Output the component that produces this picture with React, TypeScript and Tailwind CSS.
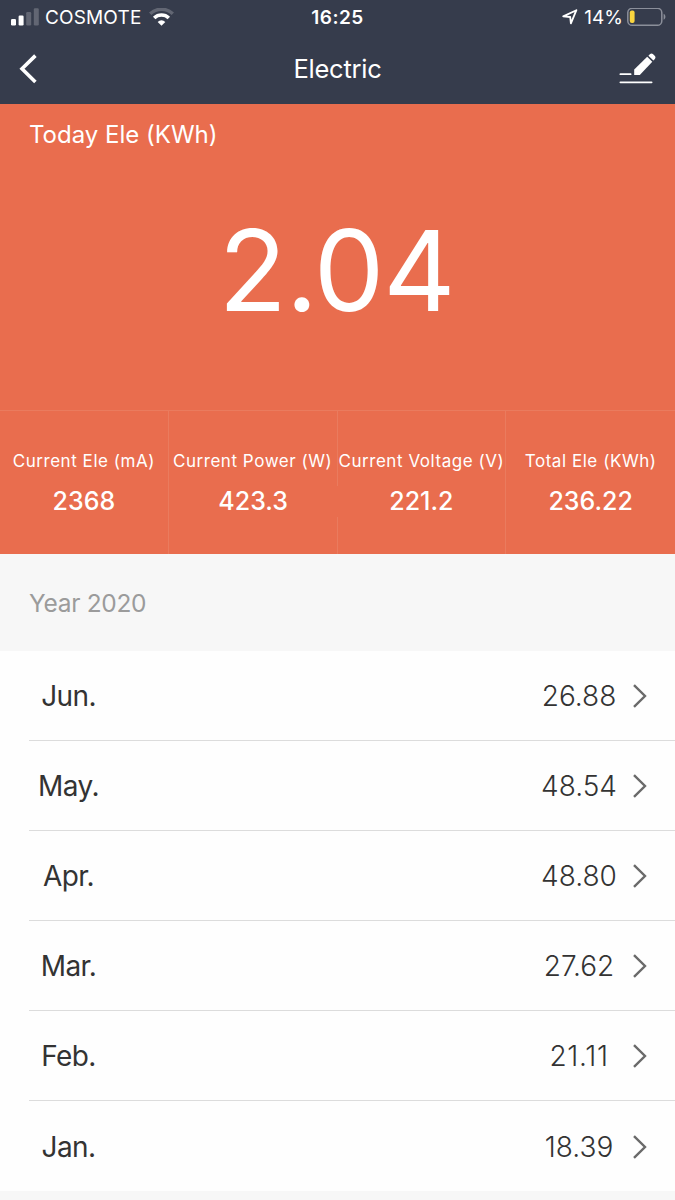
interface Stat {
  label: string;
  value: string;
}

interface MonthRow {
  month: string;
  value: string;
}

const stats: Stat[] = [
  { label: "Current Ele (mA)", value: "2368" },
  { label: "Current Power (W)", value: "423.3" },
  { label: "Current Voltage (V)", value: "221.2" },
  { label: "Total Ele (KWh)", value: "236.22" },
];

const months: MonthRow[] = [
  { month: "Jun.", value: "26.88" },
  { month: "May.", value: "48.54" },
  { month: "Apr.", value: "48.80" },
  { month: "Mar.", value: "27.62" },
  { month: "Feb.", value: "21.11" },
  { month: "Jan.", value: "18.39" },
];

const SignalIcon = () => (
  <svg width="28" height="18" viewBox="0 0 28 18" fill="#fff">
    <rect x="0" y="11" width="5" height="6.5" rx="1.2" />
    <rect x="7.6" y="7.5" width="5" height="10" rx="1.2" />
    <rect x="15.2" y="4" width="5" height="13.5" rx="1.2" opacity="0.22" />
    <rect x="22.8" y="0.3" width="5" height="17.2" rx="1.2" opacity="0.22" />
  </svg>
);

const WifiIcon = () => (
  <svg width="25" height="18" viewBox="0 0 25 18" fill="none" stroke="#fff">
    <path d="M1.2 5.8a16.2 16.2 0 0 1 22.6 0" strokeWidth="3.4" opacity="0.22" />
    <path d="M5.2 10a10.4 10.4 0 0 1 14.6 0" strokeWidth="3.5" />
    <path d="M12.5 17.8l-3.8-3.9a5.4 5.4 0 0 1 7.6 0z" fill="#fff" stroke="none" />
  </svg>
);

const LocationIcon = () => (
  <svg width="16" height="16" viewBox="0 0 16 16" fill="none" stroke="#fff" strokeWidth="1.8" strokeLinejoin="round">
    <path d="M14.4 1.2L1.2 7.4l7 .6.7 6.4z" />
  </svg>
);

const BatteryIcon = () => (
  <svg width="40" height="19" viewBox="0 0 40 19" fill="none">
    <rect x="0.8" y="0.3" width="34" height="17" rx="4.4" stroke="#8b8f9a" strokeWidth="1.5" />
    <path d="M36.6 5.8c2.4.8 2.4 5.2 0 6z" fill="#8b8f9a" />
    <rect x="2.8" y="2.6" width="4.8" height="12.4" rx="2" fill="#fad53f" />
  </svg>
);

const EditIcon = () => (
  <svg width="38" height="32" viewBox="0 0 38 32" fill="#fff">
    <rect x="0.5" y="20.3" width="12" height="1.8" rx="0.9" />
    <rect x="0.5" y="28.4" width="33" height="1.8" rx="0.9" />
    <path d="M15.2 16.4L28.2 3.8l5.1 5L20.8 22.1h-5.6z" />
    <path d="M29.4 2.7l1.7-1.6c.9-.8 1.9-.8 2.8 0l2 2c.8.9.8 1.9 0 2.8l-1.5 1.7z" />
  </svg>
);

const BackIcon = () => (
  <svg width="18" height="30" viewBox="0 0 18 30" fill="none" stroke="#fff" strokeWidth="3.6">
    <path d="M16.4 1.6L3 14.8l13.4 13.2" />
  </svg>
);

const ChevronIcon = () => (
  <svg width="16" height="24" viewBox="0 0 16 24" fill="none" stroke="#6a6a6a" strokeWidth="2.4">
    <path d="M2 1.2L13 12 2 22.8" />
  </svg>
);

const App = () => {
  return (
    <div className="flex h-[1200px] w-[675px] flex-col overflow-hidden bg-[#f7f7f7] font-['Inter','Liberation_Sans',sans-serif]">
      {/* Status bar */}
      <div className="bg-[#363c4c] text-white">
        <div className="grid h-[34px] grid-cols-3 items-center text-[19px] leading-[30px]">
          <div className="flex items-center pl-[11px]">
            <SignalIcon />
            <span className="ml-[6px] pt-[2px] tracking-[0.15px]">COSMOTE</span>
            <span className="ml-[8px]">
              <WifiIcon />
            </span>
          </div>
          <div className="pt-[2px] text-center font-semibold tracking-[0.5px]">16:25</div>
          <div className="flex items-center justify-end pr-[8px]">
            <LocationIcon />
            <span className="ml-[6px] pt-[2px]">14%</span>
            <span className="ml-[4px]">
              <BatteryIcon />
            </span>
          </div>
        </div>

        {/* Navigation */}
        <div className="grid h-[70px] grid-cols-3 items-center">
          <button className="pl-[19px]">
            <BackIcon />
          </button>
          <h1 className="text-center text-[25.5px] tracking-[-0.25px]">Electric</h1>
          <button className="flex justify-end pr-[18px]">
            <EditIcon />
          </button>
        </div>
      </div>

      {/* Today summary */}
      <div className="h-[306px] bg-[#e96d4e] text-white">
        <div className="h-[60px] pl-[29px] text-[24px] leading-[62px]">Today Ele (KWh)</div>
        <div className="pr-[2px] text-center text-[112px] leading-[212px] tracking-[-1.2px]">2.04</div>
      </div>

      <div className="grid h-[144px] grid-cols-4 border-t border-[#ea7b5e] bg-[#e96d4e] text-center text-white">
        {stats.map((stat, index) => (
          <div key={stat.label} className="flex flex-col">
            <div className={`h-[75px] whitespace-nowrap pt-[36px] text-[17px] leading-[28px] tracking-[0.55px] ${index < 3 ? "border-r border-[#ea7b5e]" : ""}`}>
              {stat.label}
            </div>
            <div className={`h-[31px] text-[25px] font-medium leading-[31px] ${index === 0 || index === 2 ? "border-r border-[#ea7b5e]" : ""}`}>
              {stat.value}
            </div>
            <div className={`flex-1 ${index < 3 ? "border-r border-[#ea7b5e]" : ""}`} />
          </div>
        ))}
      </div>

      {/* Monthly list */}
      <div className="h-[97px] pl-[29px] text-[24.5px] leading-[98px] tracking-[-0.3px] text-[#9b9b9b]">Year 2020</div>
      <div className="bg-[#fefefe]">
        {months.map((row, index) => (
          <div key={row.month} className={`ml-[29px] flex h-[90px] items-center ${index < months.length - 1 ? "border-b border-[#dcdcdc]" : "pt-[1px]"}`}>
            <div className="w-[79px] pt-[1px] text-center text-[28px] tracking-[-0.6px] text-[#333]">{row.month}</div>
            <div className={`ml-auto w-[100px] text-center text-[28px] font-light text-[#333] ${row.value === "21.11" ? "tracking-[0.7px]" : ""}`}>
              {row.value}
            </div>
            <div className="ml-[3px] mr-[27px]">
              <ChevronIcon />
            </div>
          </div>
        ))}
      </div>
    </div>
  );
};

export default App;
